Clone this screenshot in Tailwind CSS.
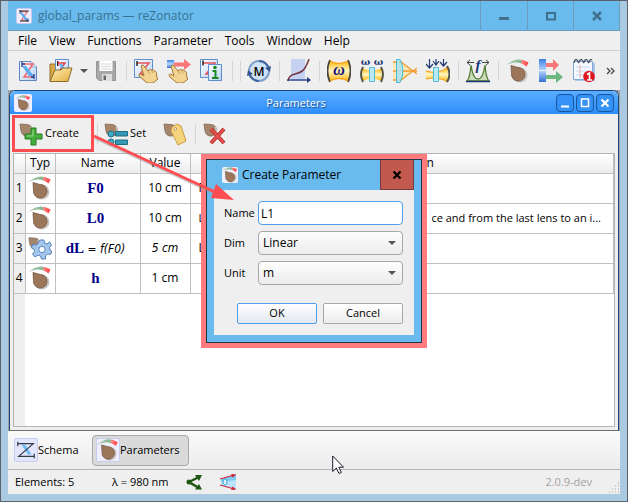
<!DOCTYPE html>
<html lang="en">
<head>
<meta charset="utf-8">
<title>global_params — reZonator</title>
<script src="https://cdn.jsdelivr.net/npm/@tailwindcss/browser@4"></script>
</head>
<body class="font-['Open_Sans',sans-serif] text-[12px] text-black">

<!-- Shared icon symbols -->
<svg class="absolute size-0" aria-hidden="true">
  <defs>
    <linearGradient id="gold" x1="0" y1="0" x2="0" y2="1"><stop offset="0" stop-color="#ffb000"/><stop offset=".5" stop-color="#fff6c0"/><stop offset="1" stop-color="#ffb000"/></linearGradient>
    <linearGradient id="folder" x1="0" y1="0" x2="1" y2="1"><stop offset="0" stop-color="#fff0b8"/><stop offset="1" stop-color="#e3ac3c"/></linearGradient>
    <linearGradient id="page" x1="0" y1="0" x2="1" y2="1"><stop offset="0" stop-color="#fff"/><stop offset="1" stop-color="#b9d2f3"/></linearGradient>
    <linearGradient id="blueBox" x1="0" y1="0" x2="0" y2="1"><stop offset="0" stop-color="#3c7fe0"/><stop offset=".5" stop-color="#b5d6ff"/><stop offset="1" stop-color="#3371d4"/></linearGradient>
    <linearGradient id="arc" x1="0" y1="0" x2="1" y2="0"><stop offset="0" stop-color="#b5cdb9"/><stop offset=".65" stop-color="#86b890"/><stop offset=".7" stop-color="#f88"/><stop offset="1" stop-color="#f33"/></linearGradient>
  </defs>
  <symbol id="knob" viewBox="0 0 24 24">
    <circle cx="14" cy="16" r="7.500" fill="#c9c5c3"/>
    <path d="M5 6.500 12 8.500A6.800 6.800 0 1 1 5.500 14.500Z" fill="#9c7659" stroke="#765642" stroke-width=".8"/>
    <path d="M0 6.500Q11-4 22.500 3.500L20.500 7.500Q11 0 0 6.500Z" fill="url(#arc)"/>
  </symbol>
  <symbol id="smallKnob" viewBox="0 0 24 24">
    <path d="M1 2 8 2.500A5.800 5.800 0 1 1 2 9Z" fill="#a5856c" stroke="#856650" stroke-width=".8"/>
    <path d="M12 5Q15 9 11 13" fill="none" stroke="#c8bcb4" stroke-width="2"/>
  </symbol>
  <symbol id="zed" viewBox="0 0 24 24">
    <path d="M7 5H17L8 18H18" fill="none" stroke="#f26a72" stroke-width="1.600"/>
    <path d="M6 7 10 7 18 17 13 17Z" fill="#5badee"/>
    <path d="M6 3V8M6 5H9M18 15V20M18 18H15" fill="none" stroke="#223e8a" stroke-width="1.300"/>
  </symbol>
  <symbol id="hand" viewBox="0 0 24 24">
    <path d="M7 7Q8 4.500 10 7L14 12Q15 9.500 17.500 11 19 9.800 20.500 12 23 12 22.500 17L24 20 19 24H13L6 18Q4 15 6.500 15L10 17Z" fill="#f3d491" stroke="#a17735" stroke-width="1"/>
    <path d="M14 12 16 15M17.500 11 19 14" stroke="#b58b48" stroke-width=".8"/>
  </symbol>
  <symbol id="waist" viewBox="0 0 24 24">
    <path d="M2 1Q12 7 22 1Q25 12 22 23Q12 17 2 23Q-1 12 2 1Z" fill="url(#gold)"/>
    <path d="M3 1Q-2 12 3 23M21 1Q26 12 21 23" fill="none" stroke="#484740" stroke-width="1.800"/>
    <path d="M3 2Q12 7 21 2M3 22Q12 17 21 22" fill="none" stroke="#f69b13" stroke-width="1"/>
  </symbol>
</svg>

<div class="relative flex h-screen flex-col border border-[#5c6068] bg-[#a9cae0]">

  <!-- Title bar -->
  <header class="flex h-[30px] shrink-0 items-stretch pr-[7px]">
    <div class="w-[7px] shrink-0"></div>
    <div class="flex flex-1 items-center border-b border-[#6c9dbd] bg-[#69bbee] pl-2">
      <svg class="size-4 rounded-xs border border-[#c8c8f4] bg-[#eeeefe]" viewBox="2 1 20 21"><use href="#zed" width="24" height="24"/><path d="M5 4H19M6 19H19" stroke="#222" stroke-width="1.500"/></svg>
      <h1 class="pl-1.5 text-[12px] leading-4 text-[#39718f]">global_params — reZonator</h1>
    </div>
    <div class="flex border-b border-[#6c9dbd] bg-[#69bbee] text-[#41708c]">
      <button aria-label="Minimize" class="flex w-[47px] items-center justify-center border-l border-[#6c9dbd]"><svg class="size-3" viewBox="0 0 12 12"><path d="M1 8.500H11" stroke="currentColor" stroke-width="3"/></svg></button>
      <button aria-label="Maximize" class="flex w-[46px] items-center justify-center border-l border-[#6c9dbd]"><svg class="size-3" viewBox="0 0 12 12"><path d="M2 3H10V9.500H2Z" fill="none" stroke="currentColor" stroke-width="2"/></svg></button>
      <button aria-label="Close" class="flex w-[47px] items-center justify-center border-x border-[#6c9dbd]"><svg class="size-3" viewBox="0 0 12 12"><path d="M2 2 10 10M10 2 2 10" stroke="currentColor" stroke-width="2.500"/></svg></button>
    </div>
  </header>

  <div class="mx-[7px] mb-[7px] flex min-h-0 flex-1 flex-col bg-[#efefef]">
    <!-- Menu -->
    <nav class="flex h-5 shrink-0 items-center gap-3 border-b border-[#cfcfcf] pl-2.5 leading-4">
      <a href="#">File</a><a href="#">View</a><a href="#">Functions</a><a href="#">Parameter</a><a href="#">Tools</a><a href="#">Window</a><a href="#">Help</a>
    </nav>

    <!-- Main toolbar -->
    <div class="flex h-[39px] shrink-0 items-center pl-2" role="toolbar" aria-label="Main">
      <div class="flex items-center gap-[9px]">
        <button aria-label="New"><svg class="size-6" viewBox="0 0 24 24"><path d="M3.500 2.500H15L20.500 8V21.500H3.500Z" fill="url(#page)" stroke="#5e86c0"/><path d="M15 2.500V8H20.500" fill="#dbe8fa" stroke="#7da0d0" stroke-width=".8"/><use href="#zed" width="24" height="24"/></svg></button>
        <button aria-label="Open"><svg class="size-6" viewBox="0 0 24 24"><path d="M1 22V5H6L8 7H18V22Z" fill="#d9a945" stroke="#94712d"/><path d="M6.500.5H19.500V16H6.500Z" fill="url(#page)" stroke="#5e8dcc"/><path d="M9 2V7M9 4H16L11 11" fill="none" stroke="#e3434c" stroke-width="1.500"/><path d="M8.500 2V7" stroke="#222"/><path d="M10 5H13L17 12H14Z" fill="#5badee"/><path d="M1 22.500 6 11H12L14 9H23L19 22.500Z" fill="url(#folder)" stroke="#8c6c2d"/></svg></button>
      </div>
      <button aria-label="Recent files" class="flex w-[21px] justify-center"><svg class="h-1 w-2" viewBox="0 0 8 4"><path d="M0 0H8L4 4Z" fill="#555"/></svg></button>
      <button aria-label="Save"><svg class="size-6" viewBox="0 0 24 24"><path d="M2.500 2.500H21.500V21.500H5L2.500 19Z" fill="#a7a7a7" stroke="#969696"/><path d="M5.500 2H18.500V12H5.500Z" fill="#fff"/><path d="M7 5H17M7 7.500H17M7 10H17" stroke="#ccc" stroke-width=".8"/><path d="M8 15H18V22H8Z" fill="#ddd"/><path d="M9.500 16.500H12V21H9.500Z" fill="#666"/></svg></button>
      <div class="ml-2 mr-[7px] h-5 w-px bg-[#d5d5d5]"></div>
      <div class="flex items-center gap-[9px]">
        <button aria-label="Pick element"><svg class="size-6" viewBox="0 0 24 24"><path d="M.5.500H18.500V18.500H.5Z" fill="url(#page)" stroke="#5e8dcc"/><path d="M3 4H15L6 15H14" fill="none" stroke="#e3535c" stroke-width="1.500"/><path d="M3 2V7" stroke="#222" stroke-width="1.500"/><use href="#hand" width="24" height="24"/></svg></button>
        <button aria-label="Pick output"><svg class="size-6" viewBox="0 0 24 24"><path d="M0 1H7V9H0Z" fill="url(#blueBox)"/><path d="M7 3.500H17V0L24 5.500 17 11V7.500H7Z" fill="#fa7777"/><use href="#hand" x="-3" width="24" height="24"/></svg></button>
        <button aria-label="Element info"><svg class="size-6" viewBox="0 0 24 24"><path d="M.5.500H17.500V18.500H.5Z" fill="url(#page)" stroke="#5e8dcc"/><path d="M3 4H15L6 15H14" fill="none" stroke="#e3535c" stroke-width="1.500"/><path d="M3 1.500V6.500" stroke="#222" stroke-width="1.500"/><path d="M8.500 5.500H21.500V21.500H8.500Z" fill="url(#page)" stroke="#5e8dcc"/><circle cx="15" cy="8.500" r="1.800" fill="#168a20"/><path d="M12.500 12H15.500V19M12 19H18.500" fill="none" stroke="#168a20" stroke-width="2"/></svg></button>
      </div>
      <div class="ml-2 mr-[7px] h-5 w-px bg-[#d5d5d5]"></div>
      <div class="mr-1.5 h-5 w-px bg-[#d5d5d5]"></div>
      <button aria-label="Round-trip matrix"><svg class="size-6" viewBox="0 0 24 24"><circle cx="12" cy="12" r="10" fill="#cfe2f8" stroke="#7f9fc9" stroke-width="2"/><path d="M2 14A10 10 0 0 0 12 22M22 10A10 10 0 0 0 12 2" fill="none" stroke="#41649f" stroke-width="2"/><path d="M0 17 1 11 6 15ZM24 7 23 13 18 9Z" fill="#36568f"/><text x="12" y="16.500" text-anchor="middle" font-family="Open Sans" font-size="12" font-weight="600">M</text></svg></button>
      <div class="ml-2 mr-[7px] h-5 w-px bg-[#d5d5d5]"></div>
      <button aria-label="Stability map"><svg class="size-6" viewBox="0 0 24 24"><path d="M4 0H18V22H4Z" fill="#c5d2f1"/><path d="M1 22Q2 16 8 15 17 13 19 7 21 3 22 0" fill="none" stroke="#75333c" stroke-width="1.500"/><path d="M0 21H21" stroke="#253a80" stroke-width="1.300"/><path d="M20 18 24 21 20 24Z" fill="#253a80"/></svg></button>
      <div class="ml-2 mr-[7px] h-5 w-px bg-[#d5d5d5]"></div>
      <div class="flex items-center gap-[9px]">
        <button aria-label="Beam parameters"><svg class="size-6" viewBox="0 0 24 24"><use href="#waist" width="24" height="24"/><text x="12" y="16" text-anchor="middle" font-family="Liberation Serif" font-size="16" font-style="italic" font-weight="700" fill="#16127a">ω</text></svg></button>
        <button aria-label="Beam variation"><svg class="size-6 overflow-visible" viewBox="0 0 24 24"><path d="M2 9Q12 14 22 9V22Q12 17 2 22Z" fill="url(#gold)"/><path d="M3 8Q-1 15 3 23M21 8Q25 15 21 23" fill="none" stroke="#555348" stroke-width="2"/><path d="M9.500 8.500H14.500V22.500H9.500Z" fill="#b8e9f4" stroke="#55bcd2"/><text x="5.500" y="6" text-anchor="middle" font-family="DejaVu Serif" font-size="10" font-weight="700" fill="#203b75">ω</text><text x="18.500" y="6" text-anchor="middle" font-family="DejaVu Serif" font-size="10" font-weight="700" fill="#203b75">ω</text></svg></button>
        <button aria-label="Caustic"><svg class="size-6" viewBox="0 0 24 24"><path d="M0 3H8L20 12 8 21H0Z" fill="#ffe9b8"/><path d="M0 3H8L24 15M0 21H8L24 9M0 12H24" fill="none" stroke="#f49a2d" stroke-width="1.300"/><path d="M3.500.500H7Q13 12 7 23.500H3.500Z" fill="#a9e2ef" fill-opacity=".85" stroke="#45bdd7"/></svg></button>
        <button aria-label="Multi-beam caustic"><svg class="size-6" viewBox="0 0 24 24"><path d="M0 12Q12 16 22 8V23Q12 17 0 20Z" fill="url(#gold)"/><path d="M0 12Q12 16 22 8M0 20Q12 17 22 23" fill="none" stroke="#f69b13"/><path d="M21 7Q26 15 21 23" fill="none" stroke="#555348" stroke-width="2"/><path d="M7.500 8.500H12.500V22.500H7.500Z" fill="#b8e9f4" stroke="#55bcd2"/><path d="M3.500 0V9M0 5 3.500 9 7 5M10 0V5M7 2 10 6 13 2M17.500 0V7M14 3 17.500 7 21 3" fill="none" stroke="#253c72" stroke-width="1.200"/></svg></button>
      </div>
      <div class="ml-2 mr-[7px] h-5 w-px bg-[#d5d5d5]"></div>
      <button aria-label="Frequencies"><svg class="size-6 overflow-visible" viewBox="0 0 24 24"><path d="M1 22Q4 19 5 6Q7 20 12 20 17 20 19 6Q20 19 23 22Z" fill="#cadcb9" stroke="#547d35" stroke-width="1.300"/><path d="M0 22.500H24" stroke="#203576" stroke-width="1.500"/><path d="M1 3.500H8M4 1 1 3.500 4 6M16 3.500H23M20 1 23 3.500 20 6" fill="none" stroke="#444"/><text x="12" y="11" text-anchor="middle" font-family="Liberation Serif" font-size="15" font-style="italic" font-weight="700" fill="#203576">f</text></svg></button>
      <div class="ml-2 mr-[7px] h-5 w-px bg-[#d5d5d5]"></div>
      <div class="flex items-center gap-[9px]">
        <button aria-label="Adjuster"><svg class="size-6"><use href="#knob"/></svg></button>
        <button aria-label="Elements output"><svg class="size-6" viewBox="0 0 24 24"><path d="M0 0H7V11H0ZM0 12H7V23H0Z" fill="url(#blueBox)"/><path d="M7 4H14V0L20 6 14 12V8H7Z" fill="#fa7777"/><path d="M7 16H17V12L24 18 17 24V20H7Z" fill="#6fb780"/></svg></button>
        <button aria-label="Notes"><svg class="size-6" viewBox="0 0 24 24"><path d="M3 4H23V22H3Z" fill="#a9c5e8"/><path d="M1.500 2.500H20.500V20.500H1.500Z" fill="#f5f9ff" stroke="#82a8d8"/><path d="M4 8H18M4 12H18M4 16H18" stroke="#c8d9ee"/><path d="M8 6V19" stroke="#edaaaa"/><path d="M2 4Q3-1 5 1T6 4M7 4Q8-1 10 1T11 4M12 4Q13-1 15 1T16 4M17 4Q18-1 20 1" fill="none" stroke="#4c5562" stroke-width="1.200"/><circle cx="17" cy="17.500" r="5.800" fill="#df171d"/><path d="M15 15.500 17.500 14V21M15 21H20" fill="none" stroke="#fff" stroke-width="1.600"/></svg></button>
      </div>
      <button aria-label="More tools" class="ml-2.5"><svg class="size-2.5" viewBox="0 0 10 10"><path d="M1 2 4 5 1 8M5 2 8 5 5 8" fill="none" stroke="#444" stroke-width="1.300"/></svg></button>
    </div>

    <!-- Parameters sub-window -->
    <main class="flex min-h-0 flex-1 flex-col bg-[#a0a0a0]">
      <section class="mx-px flex min-h-0 flex-1 flex-col rounded-t-md border border-[#174a84] border-b-[#707070] bg-[#efefef]">
        <div class="flex h-[23px] shrink-0 items-center gap-0.5 rounded-t-md bg-linear-to-b from-[#5aaeff] to-[#2d8dfa] px-1">
          <svg class="size-[18px] rounded-xs bg-[#eeeefc] p-px"><use href="#knob" width="16" height="16"/></svg>
          <h2 class="flex-1 pl-1 text-center text-[11px] leading-4 text-white [text-shadow:1px_1px_1px_#164c8c]">Parameters</h2>
          <button aria-label="Minimize Parameters" class="size-[18px] rounded-sm border border-[#17569c] bg-[#3492f6]"><svg class="size-4" viewBox="0 0 16 16"><path d="M4 11.500H12" stroke="#fff" stroke-width="2"/></svg></button>
          <button aria-label="Maximize Parameters" class="size-[18px] rounded-sm border border-[#17569c] bg-[#3492f6]"><svg class="size-4" viewBox="0 0 16 16"><path d="M4.500 4H11.500V11.500H4.500Z" fill="none" stroke="#fff" stroke-width="1.500"/></svg></button>
          <button aria-label="Close Parameters" class="size-[18px] rounded-sm border border-[#17569c] bg-[#3492f6]"><svg class="size-4" viewBox="0 0 16 16"><path d="M4.500 4.500 11.500 11.500M11.500 4.500 4.500 11.500" stroke="#fff" stroke-width="2.200"/></svg></button>
        </div>

        <div class="flex h-[39px] shrink-0 items-center pl-[9px] text-[11px]" role="toolbar" aria-label="Parameters">
          <button class="relative flex w-[74px] items-center gap-0.5"><svg class="size-6" viewBox="0 0 24 24"><use href="#smallKnob" width="24" height="24"/><path d="M12 6H17V12H23V17H17V23H12V17H6V12H12Z" fill="#46ae3e" stroke="#277823"/><path d="M14 8V14H8" stroke="#9ada86" fill="none"/></svg>Create<span class="absolute -left-[7px] -right-px -top-[7px] -bottom-[6px] border-3 border-[#ff4d52]"></span></button>
          <div class="ml-1 mr-1.5 h-5 w-px bg-[#d5d5d5]"></div>
          <button class="flex items-center gap-0.5"><svg class="size-6" viewBox="0 0 24 24"><use href="#smallKnob" width="24" height="24"/><circle cx="7" cy="12" r="3" fill="#3eaac6" stroke="#1c6e85"/><circle cx="7" cy="20" r="3" fill="#3eaac6" stroke="#1c6e85"/><path d="M11.500 9.500H23.500V14H11.500ZM11.500 18H23.500V22.500H11.500Z" fill="#3598b4" stroke="#1c6e85"/></svg>Set</button>
          <button aria-label="Annotate" class="ml-[17px]"><svg class="size-6" viewBox="0 0 24 24"><use href="#smallKnob" width="24" height="24"/><path d="M9 5 14 2 18 4 23 19 15 23 8 9Z" fill="#f6d47c" stroke="#c79a43"/><circle cx="12.500" cy="7" r="1.300" fill="#fff" stroke="#987841" stroke-width=".7"/></svg></button>
          <div class="ml-2 mr-[7px] h-5 w-px bg-[#d5d5d5]"></div>
          <button aria-label="Delete"><svg class="size-6" viewBox="0 0 24 24"><use href="#smallKnob" width="24" height="24"/><path d="M8 7 21 21M21 7 8 21" stroke="#a92c2c" stroke-width="4"/><path d="M8 7 21 21M21 7 8 21" stroke="#e84e4a" stroke-width="2.500"/></svg></button>
        </div>

        <div class="mx-[3px] mb-[3px] flex min-h-0 flex-1 flex-col border border-[#b5b5b5] bg-white">
          <table class="w-full table-fixed border-collapse text-[12px] leading-4">
            <colgroup><col class="w-[11px]"><col class="w-[30px]"><col class="w-[85px]"><col class="w-[50px]"><col></colgroup>
            <thead>
              <tr class="h-[19px] bg-linear-to-b from-white to-[#ececec] [&>th]:border-b [&>th]:border-r [&>th]:border-[#c0c0c0] [&>th]:p-0 [&>th]:font-normal">
                <th></th><th>Typ</th><th>Name</th><th>Value</th><th>Description</th>
              </tr>
            </thead>
            <tbody class="[&_td]:border-b [&_td]:border-r [&_td]:border-[#c0c0c0] [&_td]:p-0 [&_td]:text-center [&_th]:border-b [&_th]:border-r [&_th]:border-[#c0c0c0] [&_th]:bg-[#efefef] [&_th]:p-0 [&_th]:font-normal">
              <tr class="h-[30px]"><th>1</th><td><svg class="mx-auto size-6"><use href="#knob"/></svg></td><td class="pr-1! font-['Liberation_Serif',serif] text-[15px] font-bold text-[#00008b]">F0</td><td>10 cm</td><td><div class="pl-2 text-left">Focal distance of lenses</div></td></tr>
              <tr class="h-[30px]"><th>2</th><td><svg class="mx-auto size-6"><use href="#knob"/></svg></td><td class="pr-1! font-['Liberation_Serif',serif] text-[15px] font-bold text-[#00008b]">L0</td><td>10 cm</td><td><div class="flex justify-between whitespace-nowrap pl-2 pr-3 text-[11px]"><span>Length from the first lens to an obje</span><span>ce and from the last lens to an i...</span></div></td></tr>
              <tr class="h-[30px]"><th>3</th><td><svg class="mx-auto size-6" viewBox="0 0 24 24"><use href="#smallKnob" width="20" height="20"/><g stroke="#5684bb" fill="#a5c6ed"><path d="M12 4H16L16.500 7 19 8 21.500 6 23.500 9 21.500 11.500 22 14 24 15.500 22.500 18.500 19.500 18 17.500 20 17.500 23H13.500L12.500 20 10 19 7 21 4.500 18 6.500 15.500 6 13 3.500 12 4.500 8.500 8 9 10 7.500Z"/><circle cx="14" cy="13.500" r="3.200" fill="#fff"/></g></svg></td><td class="pr-1! whitespace-nowrap font-['DejaVu_Sans_Condensed','DejaVu_Sans',sans-serif] italic"><b class="font-['Liberation_Serif',serif] text-[15px] not-italic text-[#00008b]">dL</b> = f(F0)</td><td class="font-['DejaVu_Sans_Condensed','DejaVu_Sans',sans-serif] italic">5 cm</td><td><div class="pl-2 text-left">Length difference</div></td></tr>
              <tr class="h-[30px]"><th>4</th><td><svg class="mx-auto size-6"><use href="#knob"/></svg></td><td class="pr-1! font-['Liberation_Serif',serif] text-[15px] font-bold text-[#00008b]">h</td><td>1 cm</td><td></td></tr>
            </tbody>
          </table>
          <div class="w-[11px] flex-1 bg-[#efefef]"></div>
        </div>
      </section>
    </main>

    <!-- Window switcher -->
    <div class="flex h-[39px] shrink-0 items-center gap-3 border-b border-[#b5b5b5] bg-linear-to-b from-[#fafafa] to-[#ececec] pl-1.5 text-[11px]">
      <button class="flex w-[66px] items-center"><svg class="size-6 shrink-0 rounded-xs border border-[#c6cdf0] bg-[#e2e7fd]" viewBox="0 0 24 24"><path d="M7 6H11L18 17H14Z" fill="#70bdf5"/><path d="M3 3V8M3 5H20L4 19H21M21 16V21" fill="none" stroke="#353a48" stroke-width="1.300"/></svg>Schema</button>
      <button class="flex h-[31px] w-[97px] items-center rounded-sm border border-[#a8a8a8] bg-[#dadada] pl-[3px]"><svg class="size-6 shrink-0 rounded-xs border border-[#c6cdf0] bg-[#eeeefd]"><use href="#knob" width="22" height="22"/></svg>Parameters</button>
    </div>

    <!-- Status bar -->
    <footer class="flex h-6 shrink-0 items-center pl-[7px] text-[11px] leading-4">
      <span class="w-[97px]">Elements: 5</span>
      <span class="w-[74px]">λ = 980 nm</span>
      <svg class="size-4" viewBox="0 0 16 16"><path d="M13 3 3 8 13 14" fill="none" stroke="#1f5811" stroke-width="2.500"/><circle cx="3" cy="8" r="2.500" fill="#1f5811"/><path d="M9 1H16L13 7ZM9 15.500H16L13 10Z" fill="#1f5811"/></svg>
      <svg class="ml-[18px] size-4" viewBox="0 0 16 16"><path d="M1 5 16 0V16L1 11Z" fill="#b9e4fa"/><path d="M1 5 16 0V6L1 8Z" fill="#7cc9f2"/><ellipse cx="5" cy="8" rx="2" ry="3" fill="#ddf3fd" stroke="#44a7dd"/><path d="M0 5 14 1M0 11 14 15M11 0 15 1 12 3M11 16 15 15 12 13" fill="none" stroke="#d22733" stroke-width="1.200"/></svg>
      <span class="ml-auto mr-4 text-[#a2a2a2]">2.0.9-dev</span>
      <svg class="size-3 self-end" viewBox="0 0 12 12"><path d="M1 10h1m2 0h1m2 0h1m2 0h1M4 7h1m2 0h1m2 0h1M7 4h1m2 0h1M10 1h1" stroke="#aaa"/></svg>
    </footer>
  </div>

  <!-- Create Parameter dialog -->
  <div role="dialog" aria-labelledby="dialog-title" class="absolute left-[200px] top-[153px] w-[226px] border-5 border-[#ff7b7d]">
    <div class="border border-[#233748] bg-[#69bbee] px-[7px] pb-[7px]">
      <div class="flex h-[30px] items-stretch">
        <div class="flex flex-1 items-center gap-1 pl-2">
          <svg class="size-4 rounded-xs bg-[#eeeefc]"><use href="#knob" width="16" height="16"/></svg>
          <h2 id="dialog-title" class="leading-4">Create Parameter</h2>
        </div>
        <button aria-label="Close dialog" class="flex w-[34px] items-center justify-center border border-t-0 border-[#743b40] bg-[#c1594f]"><svg class="size-2.5" viewBox="0 0 10 10"><path d="M1.500 1.500 8.500 8.500M8.500 1.500 1.500 8.500" stroke="#000" stroke-width="2.200"/></svg></button>
      </div>
      <form class="flex flex-col bg-[#efefef] pb-[11px] pl-2.5 pr-[11px] pt-[11px] text-[11px]">
        <div class="grid grid-cols-[34px_1fr] items-center gap-y-1.5">
          <label for="pname">Name</label>
          <input id="pname" type="text" value="L1" class="h-6 w-full min-w-0 rounded-sm border border-[#4f9eea] bg-white px-0.5 text-[12px] outline-none">
          <label for="pdim">Dim</label>
          <div class="relative"><select id="pdim" class="h-6 w-full appearance-none rounded-sm border border-[#a8a8a8] bg-linear-to-b from-[#fdfdfd] to-[#ececec] px-1 text-[12px]"><option>Linear</option></select><svg class="pointer-events-none absolute right-[7px] top-2.5 h-1 w-2" viewBox="0 0 8 4"><path d="M0 0H8L4 4Z" fill="#555"/></svg></div>
          <label for="punit">Unit</label>
          <div class="relative"><select id="punit" class="h-6 w-full appearance-none rounded-sm border border-[#a8a8a8] bg-linear-to-b from-[#fdfdfd] to-[#ececec] px-1 text-[12px]"><option>m</option></select><svg class="pointer-events-none absolute right-[7px] top-2.5 h-1 w-2" viewBox="0 0 8 4"><path d="M0 0H8L4 4Z" fill="#555"/></svg></div>
        </div>
        <div class="mt-[18px] flex justify-end gap-1.5">
          <button type="button" class="h-[21px] w-20 rounded-xs border border-[#4f9eea] bg-linear-to-b from-white to-[#e3e8f0]">OK</button>
          <button type="button" class="h-[21px] w-20 rounded-xs border border-[#a8a8a8] bg-linear-to-b from-white to-[#ececec]">Cancel</button>
        </div>
      </form>
    </div>
  </div>

  <!-- Callout arrow and pointer -->
  <svg class="pointer-events-none absolute left-[92px] top-[130px] h-[75px] w-[145px]" viewBox="0 0 145 75"><path d="M2 7 125 64" stroke="#999" stroke-opacity=".5" stroke-width="3"/><path d="M1 5 124 62" stroke="#ff4d52" stroke-width="3"/><path d="M123 53 141 69 118 67Z" fill="#ff4d52"/></svg>
  <svg class="pointer-events-none absolute left-[331px] top-[454px] h-[20px] w-[13px]" viewBox="0 0 13 20"><path d="M.7 1V16.500L4.300 13 7 18.500 9.300 17.400 6.800 12.200H11.500Z" fill="#fff" stroke="#1b1b28"/></svg>
</div>
</body>
</html>
